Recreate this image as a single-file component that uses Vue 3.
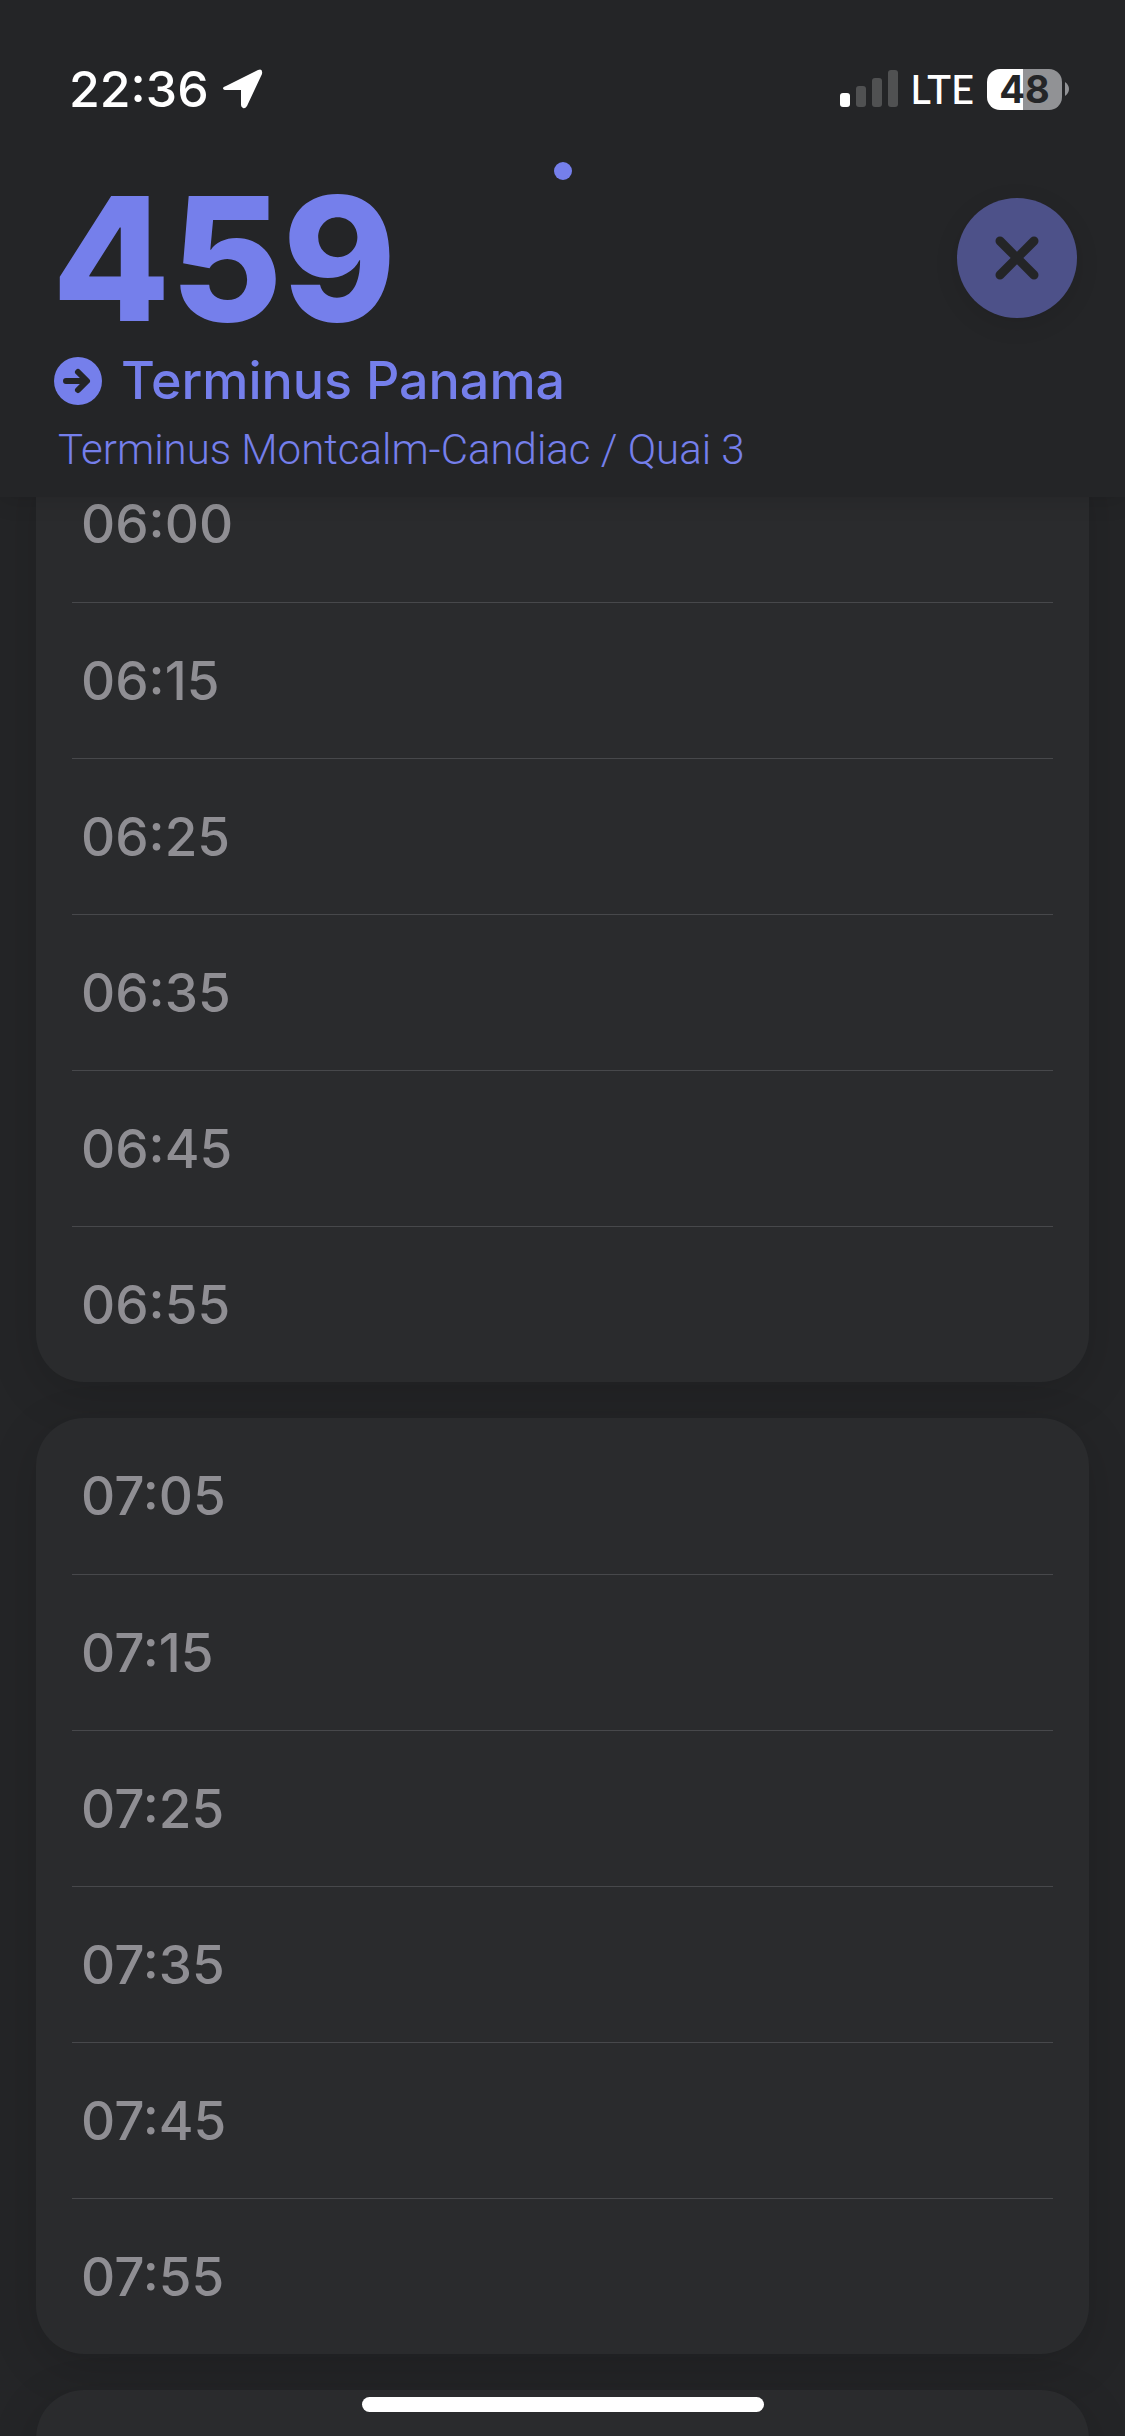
<script setup>
const route = { number: '459', direction: 'Terminus Panama', stop: 'Terminus Montcalm-Candiac / Quai 3' }

const hours = [
  { hour: '06', minutes: ['00', '15', '25', '35', '45', '55'] },
  { hour: '07', minutes: ['05', '15', '25', '35', '45', '55'] },
  { hour: '08', minutes: [] },
]
</script>

<template>
  <div class="screen">
    <header class="header">
      <div class="status">
        <div class="status-side">
          <span class="clock">22:36</span>
          <svg class="location" viewBox="0 0 40 40" aria-hidden="true">
            <path d="M3 17 L35 1 Q40 -1 39 5 L24 37 Q22 40 20 39 Q18 38 18 36 V21 H3 Q0 21 0 19 Q0 18 3 17 Z" fill="#fff" />
          </svg>
        </div>
        <div class="status-side">
          <svg class="signal" viewBox="0 0 58 38" aria-hidden="true">
            <rect x="0" y="23" width="10" height="14" rx="3" fill="#fff" />
            <rect x="16" y="16" width="10" height="21" rx="3" fill="#505152" />
            <rect x="32" y="8" width="10" height="29" rx="3" fill="#505152" />
            <rect x="48" y="0" width="10" height="37" rx="3" fill="#505152" />
          </svg>
          <span class="network">LTE</span>
          <span class="battery">48</span>
          <svg class="nub" viewBox="0 0 5 14" aria-hidden="true">
            <path d="M0 0 Q4 3 4 7 Q4 11 0 14 Z" fill="#919295" />
          </svg>
        </div>
      </div>
      <span class="page-dot"></span>
      <div class="top">
        <h1 class="number">{{ route.number }}</h1>
        <button class="close" type="button" aria-label="Fermer">
          <svg viewBox="0 0 44 44" aria-hidden="true">
            <path d="M5 5 L39 39 M39 5 L5 39" fill="none" stroke="#242527" stroke-width="9" stroke-linecap="round" />
          </svg>
        </button>
      </div>
      <div class="direction">
        <svg class="arrow" viewBox="0 0 48 48" aria-hidden="true">
          <circle cx="24" cy="24" r="24" fill="#757feb" />
          <path d="M12 24 H32 M24 15 L33 24 L24 33" fill="none" stroke="#242527" stroke-width="6" stroke-linecap="round" stroke-linejoin="round" />
        </svg>
        <h2>{{ route.direction }}</h2>
      </div>
      <p class="stop">{{ route.stop }}</p>
    </header>

    <main class="timetable">
      <ul v-for="group in hours" :key="group.hour" class="card">
        <li v-for="minute in group.minutes" :key="minute" class="row">
          <time>{{ group.hour }}:{{ minute }}</time>
        </li>
      </ul>
    </main>

    <div class="home-indicator"></div>
  </div>
</template>

<style>
body {
  background: #242527;
}
</style>

<style scoped>
.screen {
  position: relative;
  display: flex;
  flex-direction: column;
  height: 100vh;
  overflow: hidden;
  background: #242527;
  font-family: Inter, "Liberation Sans", sans-serif;
}

.header {
  position: relative;
  z-index: 1;
  flex: none;
  box-sizing: border-box;
  height: 497px;
  padding-top: 59px;
  background: #242527;
  color: #757feb;
  box-shadow: 0 0 24px rgba(0, 0, 0, 0.15);
}

.status {
  display: flex;
  justify-content: space-between;
  height: 60px;
  padding: 0 55px 0 69px;
  color: #fff;
}

.status-side {
  display: flex;
  align-items: center;
}

.clock {
  font-size: 50px;
  font-weight: 500;
  line-height: 60px;
}

.location {
  width: 40px;
  height: 40px;
  margin-left: 14px;
}

.signal {
  width: 58px;
  height: 38px;
  margin-right: 12px;
}

.network {
  margin-right: 13px;
  font-family: Lato, Inter, sans-serif;
  font-size: 40px;
  font-weight: 500;
  line-height: 60px;
}

.battery {
  width: 75px;
  height: 41px;
  border-radius: 13px;
  background: linear-gradient(90deg, #fff 48%, #919295 48%);
  color: #242527;
  font-size: 38px;
  font-weight: 700;
  line-height: 41px;
  text-align: center;
}

.nub {
  width: 5px;
  height: 14px;
  margin-left: 3px;
}

.page-dot {
  display: block;
  width: 18px;
  height: 18px;
  margin: 43px auto 0;
  border-radius: 50%;
  background: #757feb;
}

.top {
  display: flex;
  align-items: center;
  justify-content: space-between;
  height: 156px;
  padding: 0 48px 0 52px;
}

.number {
  margin: 0;
  font-size: 172px;
  font-weight: 800;
  line-height: 156px;
}

.close {
  display: flex;
  align-items: center;
  justify-content: center;
  width: 120px;
  height: 120px;
  padding: 0;
  border: 0;
  border-radius: 50%;
  background: #4d5189;
  box-shadow: 0 6px 24px rgba(0, 0, 0, 0.1);
}

.close svg {
  width: 44px;
  height: 44px;
}

.direction {
  display: flex;
  align-items: center;
  height: 72px;
  margin-top: 9px;
  padding-left: 54px;
}

.arrow {
  width: 48px;
  height: 48px;
}

h2 {
  margin: 0 0 0 19px;
  font-size: 52px;
  font-weight: 500;
  line-height: 72px;
}

.stop {
  margin: 0;
  padding-left: 58px;
  font-family: Roboto, Inter, sans-serif;
  font-size: 42px;
  font-weight: 350;
  line-height: 66px;
}

.timetable {
  display: flex;
  flex: 1;
  flex-direction: column;
  gap: 36px;
  min-height: 0;
  margin-top: -51px;
  padding: 0 36px;
}

.card {
  flex: none;
  min-height: 156px;
  margin: 0;
  padding: 0 36px;
  border-radius: 48px;
  background: #2a2b2d;
  box-shadow: 0 12px 48px rgba(0, 0, 0, 0.15);
  list-style: none;
}

.row {
  box-sizing: border-box;
  height: 156px;
  padding-left: 9px;
  color: #8f8e93;
  font-size: 53px;
  font-weight: 500;
  line-height: 156px;
}

.row + .row {
  border-top: 1px solid #47484b;
}

.home-indicator {
  position: absolute;
  z-index: 2;
  bottom: 24px;
  left: 50%;
  width: 402px;
  height: 15px;
  border-radius: 8px;
  background: #fff;
  transform: translateX(-50%);
}
</style>
